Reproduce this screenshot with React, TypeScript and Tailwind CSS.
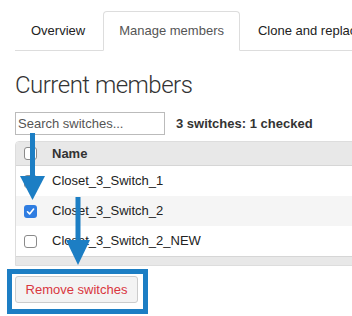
import React from "react";

function Box({ checked = false }: { checked?: boolean }) {
  if (checked) {
    return (
      <span className="flex h-[13px] w-[13px] items-center justify-center rounded-[3px] bg-[#2f7de1]">
        <svg width="9" height="9" viewBox="0 0 9 9">
          <path d="M1.5 4.8 L3.6 6.9 L7.6 2" stroke="#fff" strokeWidth="1.6" fill="none" strokeLinecap="round" strokeLinejoin="round" />
        </svg>
      </span>
    );
  }
  return <span className="block h-[13px] w-[13px] rounded-[3px] border border-[#8a8a8a] bg-white" />;
}

export default function App() {
  const rows = [
    { name: "Closet_3_Switch_1", checked: false, striped: false },
    { name: "Closet_3_Switch_2", checked: true, striped: true },
    { name: "Closet_3_Switch_2_NEW", checked: false, striped: false },
  ];
  return (
    <div
      className="relative h-[316px] w-[352px] overflow-hidden bg-white text-[13px] text-[#333]"
      style={{ fontFamily: '"Liberation Sans", Arial, sans-serif' }}
    >
      <div className="pl-[15px] pt-[11px]">
        {/* tabs */}
        <div className="flex w-[400px] border-b border-[#ddd]">
          <div className="mb-[-1px] mr-[2px] whitespace-nowrap border border-transparent px-[15px] py-[9px] leading-[20px] text-[#222]">
            Overview
          </div>
          <div className="mb-[-1px] mr-[2px] whitespace-nowrap rounded-t-[4px] border border-[#ddd] border-b-white bg-white px-[15px] py-[9px] leading-[20px] text-[#555]">
            Manage members
          </div>
          <div className="mb-[-1px] whitespace-nowrap border border-transparent px-[15px] py-[9px] leading-[20px] text-[#222]">
            Clone and replace
          </div>
        </div>

        {/* heading */}
        <h3
          className="mt-[21px] text-[24px] font-light leading-[26px] tracking-[-0.5px] text-[#333]"
          style={{ fontFamily: "Roboto, 'Liberation Sans', sans-serif" }}
        >
          Current members
        </h3>

        {/* search */}
        <div className="mt-[14px] flex items-center">
          <div className="flex h-[23px] w-[150px] items-center border border-[#bbb] bg-white px-[2px] text-[13px] text-[#555]">
            Search switches...
          </div>
          <div className="ml-[11px] font-bold text-[#333]">3 switches: 1 checked</div>
        </div>

        {/* table */}
        <div className="mt-[6px] w-[400px] overflow-hidden rounded-tl-[4px] border border-[#ddd]">
          <div className="flex h-[24px] items-center border-b border-[#d6d6d6] bg-[#e8e8e8]">
            <div className="ml-[8px] w-[28px]">
              <Box />
            </div>
            <div className="font-bold text-[#333]">Name</div>
          </div>
          {rows.map((r) => (
            <div
              key={r.name}
              className={`flex h-[30px] items-center ${r.striped ? "bg-[#f5f5f5]" : "bg-white"}`}
            >
              <div className="ml-[8px] w-[28px]">
                <Box checked={r.checked} />
              </div>
              <div className="text-[#222]">{r.name}</div>
            </div>
          ))}
          <div className="h-[9px] border-t border-[#d6d6d6] bg-[#e8e8e8]" />
        </div>

        {/* button */}
        <div className="mt-[10px]">
          <button className="h-[27px] w-[123px] rounded-[3px] border border-[#ccc] bg-[#f3f3f3] text-[13px] text-[#d9363e]">
            Remove switches
          </button>
        </div>
      </div>

      {/* highlight box */}
      <div className="absolute left-[7px] top-[269px] h-[45px] w-[141px] border-[5px] border-[#1c7ec4]" />

      {/* arrows */}
      <svg className="absolute left-0 top-0" width="352" height="316" viewBox="0 0 352 316">
        <rect x="30" y="133" width="5" height="44" fill="#1c7ec4" />
        <polygon points="20,176 45,176 32.5,200" fill="#1c7ec4" />
        <rect x="75.5" y="197" width="5" height="44" fill="#1c7ec4" />
        <polygon points="66,240 90,240 78,265" fill="#1c7ec4" />
      </svg>
    </div>
  );
}
